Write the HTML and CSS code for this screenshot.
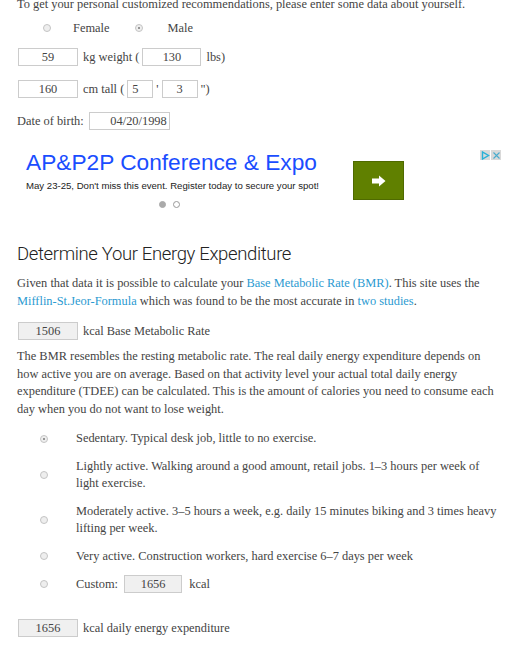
FILE: index.html
```html
<!DOCTYPE html>
<html lang="en">
<head>
    <meta charset="UTF-8">
    <title>Energy Expenditure</title>
    <link rel="stylesheet" href="styles.css">
</head>
<body>
<div class="page">

    <!-- Personal data -->
    <p class="intro">To get your personal customized recommendations, please enter some data about yourself.</p>

    <div class="gender">
        <label><span class="radio"></span>Female</label>
        <label><span class="radio checked"></span>Male</label>
    </div>

    <div class="row">
        <input class="field" type="text" value="59">
        <span>kg weight (</span>
        <input class="field mid" type="text" value="130">
        <span class="after">lbs)</span>
    </div>

    <div class="row">
        <input class="field" type="text" value="160">
        <span>cm tall (</span>
        <input class="field tiny" type="text" value="5">
        <span class="tick">'</span>
        <input class="field small" type="text" value="3">
        <span class="tick">")</span>
    </div>

    <div class="row">
        <span class="dob-label">Date of birth:</span>
        <input class="field date" type="text" value="04/20/1998">
    </div>

    <!-- Ad -->
    <div class="ad">
        <div class="ad-text">
            <div class="ad-title">AP&amp;P2P Conference &amp; Expo</div>
            <div class="ad-sub">May 23-25, Don't miss this event. Register today to secure your spot!</div>
            <div class="ad-dots"><span class="dot on"></span><span class="dot"></span></div>
        </div>
        <div class="ad-btn">
            <svg width="16" height="12" viewBox="0 0 16 12"><path d="M1 3.5h7V0.5L14.5 6 8 11.5V8.5H1z" fill="#fff"/></svg>
        </div>
        <div class="ad-icons">
            <span class="ad-ic"><svg width="9" height="9" viewBox="0 0 9 9"><path d="M1.5 1v7l6-3.5z" fill="none" stroke="#28b0d8" stroke-width="1.4"/></svg></span>
            <span class="ad-ic"><svg width="9" height="9" viewBox="0 0 9 9"><path d="M1.5 1.5l6 6M7.5 1.5l-6 6" stroke="#4aaccd" stroke-width="1.1"/></svg></span>
        </div>
    </div>

    <!-- Energy expenditure -->
    <h2>Determine Your Energy Expenditure</h2>
    <p>Given that data it is possible to calculate your <a href="#">Base Metabolic Rate (BMR)</a>. This site uses the <a href="#">Mifflin-St.Jeor-Formula</a> which was found to be the most accurate in <a href="#">two studies</a>.</p>

    <div class="row">
        <input class="field ro" type="text" value="1506" readonly>
        <span>kcal Base Metabolic Rate</span>
    </div>

    <p>The BMR resembles the resting metabolic rate. The real daily energy expenditure depends on how active you are on average. Based on that activity level your actual total daily energy expenditure (TDEE) can be calculated. This is the amount of calories you need to consume each day when you do not want to lose weight.</p>

    <ul class="levels">
        <li><span class="radio checked"></span><span class="lv">Sedentary. Typical desk job, little to no exercise.</span></li>
        <li><span class="radio"></span><span class="lv">Lightly active. Walking around a good amount, retail jobs. 1–3 hours per week of light exercise.</span></li>
        <li><span class="radio"></span><span class="lv">Moderately active. 3–5 hours a week, e.g. daily 15 minutes biking and 3 times heavy lifting per week.</span></li>
        <li><span class="radio"></span><span class="lv">Very active. Construction workers, hard exercise 6–7 days per week</span></li>
        <li><span class="radio"></span><span class="lv custom">Custom: <input class="field ro" type="text" value="1656" readonly> kcal</span></li>
    </ul>

    <div class="row total">
        <input class="field ro" type="text" value="1656" readonly>
        <span>kcal daily energy expenditure</span>
    </div>

</div>
</body>
</html>
```

FILE: styles.css
```css
/* General */
* { margin: 0; padding: 0; box-sizing: border-box; }
body { font-family: "Liberation Serif", serif; font-size: 12.4px; color: #444; background: #fff; }
.page { padding: 0 8px 0 17px; margin-top: -4px; }
p { line-height: 17.5px; }
a { color: #2b9ad1; text-decoration: none; }

/* Inputs */
.field { width: 60px; height: 18px; border: 1px solid #ccc; background: #fff; font: 12.4px "Liberation Serif", serif;
    color: #444; text-align: center; padding: 0; outline: none; }
.field.mid { width: 59px; }
.field.tiny { width: 26px; text-align: left; padding-left: 4px; }
.field.small { width: 36px; }
.field.date { width: 81px; text-align: right; padding-right: 2px; }
.field.ro { background: #f0f0f0; }

/* Radios */
.radio { display: inline-block; width: 8px; height: 8px; border-radius: 50%; border: 1px solid #c4c4c4;
    background: #eee; position: relative; flex: none; }
.radio.checked::after { content: ""; position: absolute; left: 2px; top: 2px; width: 2px; height: 2px;
    border-radius: 50%; background: #777; }

/* Personal data */
.intro { line-height: 17px; }
.gender { display: flex; height: 18px; align-items: center; margin: 6px 0 11px; }
.gender label { display: flex; align-items: center; }
.gender label:first-child { margin-left: 26px; }
.gender label:first-child .radio { margin-right: 22px; }
.gender label:last-child { margin-left: 26px; }
.gender label:last-child .radio { margin-right: 24px; }

.row { display: flex; align-items: center; height: 18px; margin-bottom: 14px; margin-left: 1px; }
.row span { margin: 0 3px 0 5px; }
.row span.after { margin-left: 5px; }
.row span.tick { margin: 0 3px 0 3px; }
.row .dob-label { margin: 0 5px 0 -1px; }

/* Ad */
.ad { position: relative; display: flex; height: 103px; padding: 10px 0 0 9px; margin-top: -5px; }
.ad-text { width: 327px; }
.ad-title { font: 22.7px "Liberation Sans", Arial, sans-serif; color: #1a4dff; line-height: 26px; }
.ad-sub { font: 9.6px "Liberation Sans", Arial, sans-serif; color: #222; margin-top: 5px; }
.ad-dots { display: flex; gap: 7px; margin-top: 10px; padding-left: 133px; }
.dot { width: 7px; height: 7px; border-radius: 50%; border: 1px solid #999; background: #fff; }
.dot.on { background: #aaa; border-color: #aaa; }
.ad-btn { width: 51px; height: 39px; margin-top: 12px; background: #608000; border: 1px solid #4f6a00;
    display: flex; align-items: center; justify-content: center; }
.ad-icons { position: absolute; top: 11px; right: 0; display: flex; gap: 1px; }
.ad-ic { width: 10px; height: 10px; background: #d9d9d9; display: flex; align-items: center; justify-content: center; }

/* Energy */
h2 { font: 300 18.5px Roboto, sans-serif; letter-spacing: -0.35px; color: #222; margin: 0 0 9px; line-height: 24px; }
h2 + p { margin-bottom: 12px; }
h2 + p + .row { margin-bottom: 8px; }

.levels { list-style: none; margin: 12px 0 0; }
.levels li { display: flex; align-items: center; margin-bottom: 10px; }
.levels .radio { margin: 0 28px 0 23px; }
.levels .lv { line-height: 17.5px; }
.custom .field { width: 58px; margin: 0 4px 0 3px; }
.row.total { margin-top: 26px; }
```
